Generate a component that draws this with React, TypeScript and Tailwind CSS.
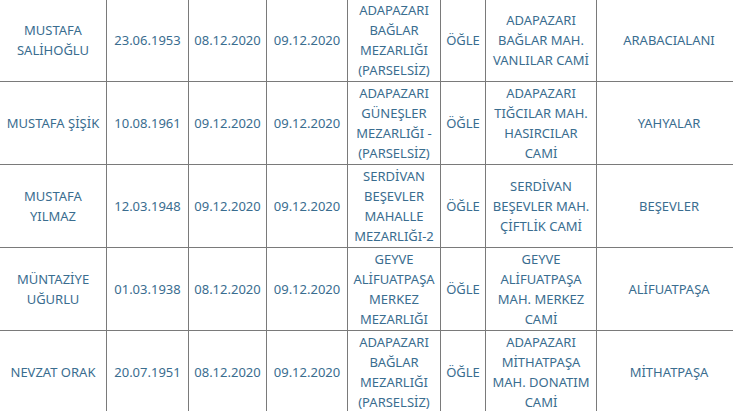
import React from "react";

type Row = string[];

// Turkish capitals written as escapes so the code points are certain
const I = "\u0130"; // İ
const G = "\u011E"; // Ğ
const S = "\u015E"; // Ş
const U = "\u00DC"; // Ü
const O = "\u00D6"; // Ö
const C = "\u00C7"; // Ç

const OGLE = `${O}${G}LE`;
const BAGLAR = `BA${G}LAR`;
const MEZARLIGI = `MEZARLI${G}I`;
const PARSELSIZ = `(PARSELS${I}Z)`;
const CAMI = `CAM${I}`;

const rows: Row[] = [
  [
    `MUSTAFA SAL${I}HO${G}LU`,
    "23.06.1953",
    "08.12.2020",
    "09.12.2020",
    `ADAPAZARI ${BAGLAR} ${MEZARLIGI} ${PARSELSIZ}`,
    OGLE,
    `ADAPAZARI ${BAGLAR} MAH. VANLILAR ${CAMI}`,
    "ARABACIALANI",
  ],
  [
    `MUSTAFA ${S}${I}${S}${I}K`,
    "10.08.1961",
    "09.12.2020",
    "09.12.2020",
    `ADAPAZARI G${U}NE${S}LER ${MEZARLIGI} - ${PARSELSIZ}`,
    OGLE,
    `ADAPAZARI TI${G}CILAR MAH. HASIRCILAR ${CAMI}`,
    "YAHYALAR",
  ],
  [
    "MUSTAFA YILMAZ",
    "12.03.1948",
    "09.12.2020",
    "09.12.2020",
    `SERD${I}VAN BE${S}EVLER MAHALLE ${MEZARLIGI}-2`,
    OGLE,
    `SERD${I}VAN BE${S}EVLER MAH. ${C}${I}FTL${I}K ${CAMI}`,
    `BE${S}EVLER`,
  ],
  [
    `M${U}NTAZ${I}YE U${G}URLU`,
    "01.03.1938",
    "08.12.2020",
    "09.12.2020",
    `GEYVE AL${I}FUATPA${S}A MERKEZ ${MEZARLIGI}`,
    OGLE,
    `GEYVE AL${I}FUATPA${S}A MAH. MERKEZ ${CAMI}`,
    `AL${I}FUATPA${S}A`,
  ],
  [
    "NEVZAT ORAK",
    "20.07.1951",
    "08.12.2020",
    "09.12.2020",
    `ADAPAZARI ${BAGLAR} ${MEZARLIGI} ${PARSELSIZ}`,
    OGLE,
    `ADAPAZARI M${I}THATPA${S}A MAH. DONATIM ${CAMI}`,
    `M${I}THATPA${S}A`,
  ],
];

const App = () => {
  return (
    <div lang="tr" className="w-[733px] h-[411px] overflow-hidden bg-white">
      <table className="table-fixed border-collapse w-[742px] -ml-px -mt-[2px] font-['Noto_Sans','DejaVu_Sans',sans-serif] text-[13px] leading-5 text-[#3a6d8f]">
        <colgroup>
          <col className="w-[107px]" />
          <col className="w-[82px]" />
          <col className="w-[78px]" />
          <col className="w-[81px]" />
          <col className="w-[93px]" />
          <col className="w-[45px]" />
          <col className="w-[111px]" />
          <col className="w-[145px]" />
        </colgroup>
        <tbody>
          {rows.map((row, r) => (
            <tr key={r}>
              {row.map((cell, c) => (
                <td
                  key={c}
                  className="border border-[#7a7a7a] px-[4px] py-px text-center align-middle"
                >
                  {cell}
                </td>
              ))}
            </tr>
          ))}
        </tbody>
      </table>
    </div>
  );
};

export default App;
